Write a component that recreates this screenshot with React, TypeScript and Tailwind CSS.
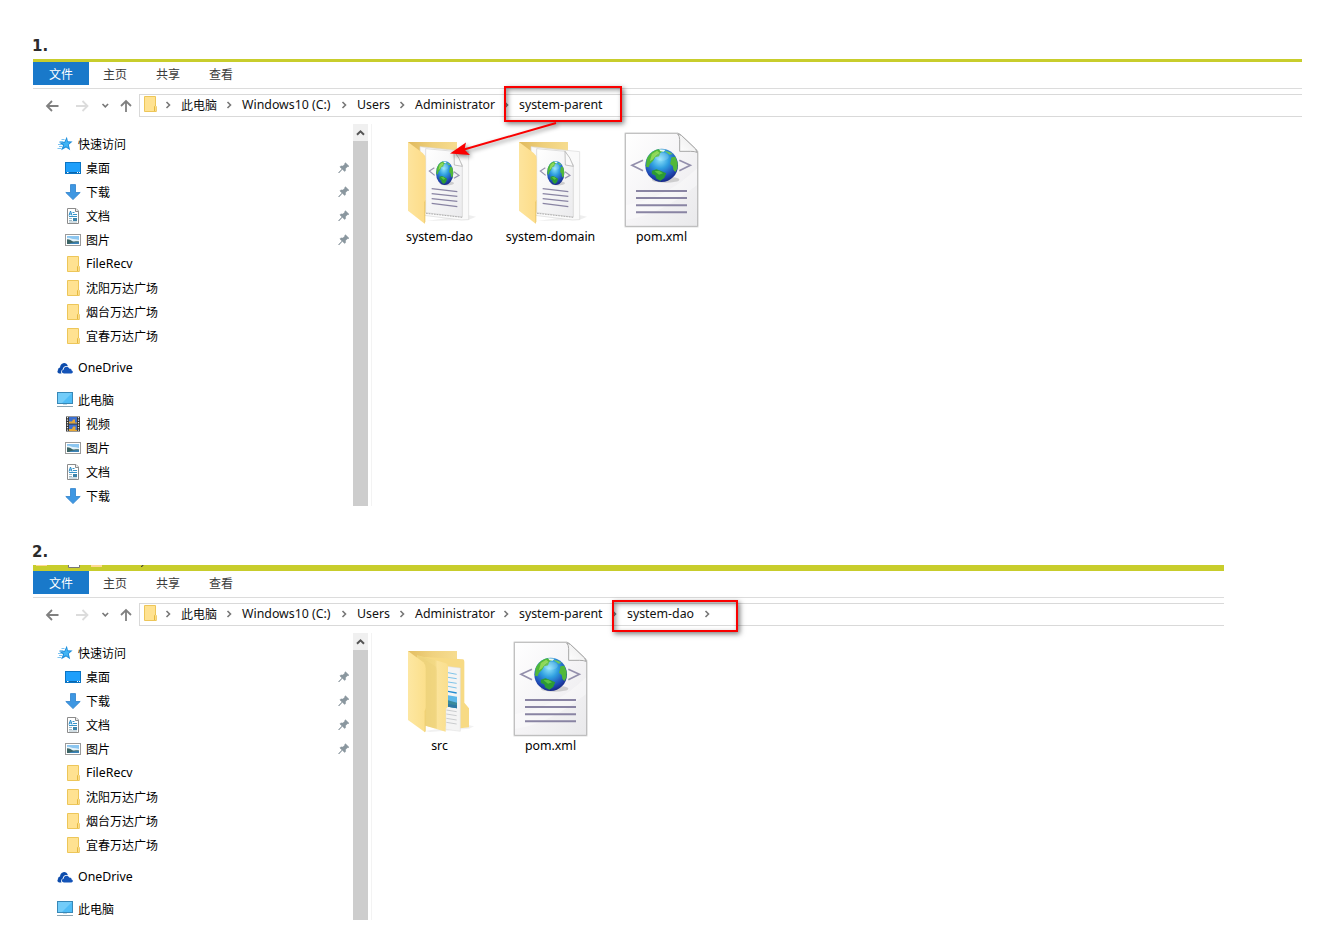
import React, { ReactNode } from "react";

const latin = "font-['Noto_Sans','Noto_Sans_CJK_SC',sans-serif] text-[12.35px]";
const cjk = "font-['Noto_Sans_CJK_SC',sans-serif] text-[12px]";

const isLatin = (s: string) => /^[\x00-\x7f]+$/.test(s);

function Label({ children }: { children: string }) {
  return <span className={`${isLatin(children) ? latin : cjk} whitespace-nowrap leading-6`}>{children}</span>;
}

/* ---------- small icons (16 x 16) ---------- */

function Small({ children }: { children: ReactNode }) {
  return (
    <svg width="16" height="16" viewBox="0 0 16 16" className="block shrink-0">
      {children}
    </svg>
  );
}

const StarIcon = () => (
  <Small>
    <path d="M9.800.8 10.900 5.300 15.600 5.600 11.800 8.700 13.200 14.300 9 11.400 4.200 14.300 6 9.300 2 6.500 7.300 5.900z" fill="#1f8edb" />
    <path d="M9.600 3.200 10.400 6.300 13.200 6.600 10.800 8.800 11.500 12 8.900 10.200 6.300 11.500 7.200 8.800 5 7.200 8 6.800z" fill="#41b4f5" />
    <path d="M4.500 3.500h3M2.500 5.500h4M1 8.500h4M2 10.500h3M.5 12.500h4" stroke="#6dbdf0" strokeWidth=".9" />
  </Small>
);

const DesktopIcon = () => (
  <Small>
    <rect x=".5" y="2.500" width="15" height="11" fill="#1e9ffb" stroke="#0a74c4" />
    <path d="M15 3v8L6 13h9z" fill="#38b0ff" opacity=".6" />
    <path d="M1 12.500h14" stroke="#0b67ad" />
    <path d="M2 12.500h1.500M12 12.500h1M14 12.500h1" stroke="#fff" />
  </Small>
);

const DownIcon = () => (
  <Small>
    <path d="M5.500.6h5v7.900h4.700L8 15.600.8 8.500h4.700z" fill="#3e97e2" stroke="#2c80cb" strokeWidth=".8" />
  </Small>
);

const DocIcon = () => (
  <Small>
    <path d="M2.500.5h8.500l2.500 2.500v12.500h-11z" fill="#fff" stroke="#8b8b8b" />
    <path d="M10.500.5v3h3" fill="#eee" stroke="#8b8b8b" />
    <path d="M7.500 4.500H9.500M8 6.500h4M4 8.500h8" stroke="#3794c9" />
    <path d="m4 7.500 1.500-4.500L7 7.500M4.500 6h2" fill="none" stroke="#278bc8" />
    <path d="M4 10.500h3M4 12.500h3M4 14h8" stroke="#8aa8b8" strokeWidth=".8" />
    <rect x="8" y="10" width="4" height="3" fill="#3d83a9" />
  </Small>
);

const PictureIcon = () => (
  <Small>
    <rect x=".5" y="2.500" width="15" height="11" fill="#fff" stroke="#9b9b9b" />
    <rect x="2" y="4" width="12" height="8" fill="#8cc6f0" />
    <path d="M2 6c3-1 4 1 6 1s4 .5 6 1v2H2z" fill="#e3f2fa" />
    <path d="M2 7.200c3 0 4 1.500 6 2.300 2 .3 4-.4 6 0v2.500H2z" fill="#3b6464" />
    <path d="M4 12c2-1.800 7-1.800 10-1.800v1.800z" fill="#3c84b8" />
  </Small>
);

const FolderIcon = () => (
  <Small>
    <path d="M2.500.5h11v9.300l.8.800v4.900H2.500z" fill="#ffe291" stroke="#edc659" />
    <path d="M12.500 15v-4.500l1-1" fill="none" stroke="#e5b93f" />
  </Small>
);

const CloudIcon = () => (
  <Small>
    <path d="M5.200 9C3 9 .5 9.500.4 11.500c0 1 .8 1.900 1.900 1.900h2.200C3.600 12 4 10 5.700 9.400 6 7 7.500 5.800 9.500 5.900c.5 0 1 .1 1.400.3C10.200 4 8.300 2.800 6.400 3.200 4.300 3.600 3 5.200 3.100 7.400 2 7.600 1 8.500.8 9.800z" fill="#0c4bab" />
    <path d="M7.200 13.500c-3 0-3.200-3.400-.6-3.700C6.500 6.300 11 5.500 12.200 8.500c2 0 2.500 1.200 2.400 2 1.800.5 1.500 3-.3 3z" fill="#1454b8" />
  </Small>
);

const ComputerIcon = () => (
  <Small>
    <rect x=".5" y=".5" width="15" height="11" fill="#4fbcf6" stroke="#3888b7" />
    <path d="M1 1h14L5 11H1z" fill="#8ad7fc" opacity=".6" />
    <path d="M6 12h4v1H6z" fill="#c3dbe7" />
    <path d="M0 14.500h16" stroke="#8ba4b2" strokeWidth="1" />
  </Small>
);

const VideoIcon = () => (
  <Small>
    <rect x="1" y=".5" width="14" height="15" fill="#333" />
    <rect x="4" y="1" width="8" height="6.500" fill="#3c6fd0" />
    <rect x="4" y="8.500" width="8" height="6.500" fill="#3c6fd0" />
    <path d="M4 5.500h3l1-2h2v3H12v1H4zM4 13h3l1-2.500h2.500V14H12v1H4z" fill="#e2a637" />
    <path d="M2.500 1v14M13.500 1v14" stroke="#eee" strokeWidth="1.200" strokeDasharray="1.200 1.300" />
  </Small>
);

const PinIcon = () => (
  <svg width="12" height="12" viewBox="0 0 12 12" className="block shrink-0">
    <path d="M7.500.8 11 4.200l-1 .6-.8-.1-1.700 2 .1 1.900-1 .9-2.200-2.200L1 11l-.5-.5L4 7 1.900 4.900l.9-1 2 .1 2-1.700-.1-.8z" fill="#8a979f" stroke="#8a979f" strokeWidth=".5" />
  </svg>
);

/* ---------- large icons ---------- */

function Globe({ cx, cy, rx, ry, id }: { cx: number; cy: number; rx: number; ry: number; id: string }) {
  return (
    <g transform={`translate(${cx} ${cy}) scale(${rx / 50} ${ry / 50})`}>
      <defs>
        <radialGradient id={`${id}-sea`} cx=".45" cy=".32" r=".68">
          <stop offset="0" stopColor="#8fe4fb" />
          <stop offset=".4" stopColor="#2f9fe0" />
          <stop offset=".8" stopColor="#1f49b4" />
          <stop offset="1" stopColor="#182a86" />
        </radialGradient>
      </defs>
      <ellipse cx="12" cy="43" rx="42" ry="9" fill="#777" opacity=".3" />
      <circle r="50" fill={`url(#${id}-sea)`} />
      <path d="M-46-18C-38-36-22-47-8-48L6-43-4-38-8-27-20-24-26-14-36-4-40 6-48 4Z" fill="#4fb83a" />
      <path d="M-30-34-14-44-6-38-18-30-26-18-36-12Z" fill="#8fd857" />
      <path d="M-30 16-16 12 0 18 14 24 8 38-4 46-16 40-20 30-30 26Z" fill="#2c9b34" />
      <path d="M-22 18-8 16 4 24-8 28Z" fill="#5cc343" />
      <path d="M30-24 42-26 49-8 48 10 42 20 36 14 34 2 26-4 28-14Z" fill="#52b83a" />
      <path d="M8-44 24-40 34-34 24-32 18-36Z" fill="#6cc75a" />
      <path d="M-8-48 12-47 6-41-4-42Z" fill="#e6f8ee" />
      <ellipse cx="0" cy="-26" rx="22" ry="12" fill="#fff" opacity=".15" />
    </g>
  );
}

function XmlFile({ id }: { id: string }) {
  return (
    <svg width="95" height="97" viewBox="12 18 285 291" className="block">
      <defs>
        <linearGradient id={`${id}-p`} x1="0" y1="0" x2="1" y2="1">
          <stop offset="0" stopColor="#fff" />
          <stop offset=".5" stopColor="#f5f4f6" />
          <stop offset="1" stopColor="#e9e9eb" />
        </linearGradient>
        <linearGradient id={`${id}-f`} x1="0" y1="1" x2="1" y2="0">
          <stop offset="0" stopColor="#fff" />
          <stop offset=".5" stopColor="#f4f4f4" />
          <stop offset="1" stopColor="#d2d2d2" />
        </linearGradient>
      </defs>
      <path d="M46 25H203L263 80V305H46Z" fill="none" stroke="#ccc" strokeWidth="5" opacity=".6" />
      <path d="M46 25H203Q208 25 214 31L257 72Q263 78 263 84V304H46Z" fill={`url(#${id}-p)`} stroke="#b7b7b7" strokeWidth="3" />
      <path d="M48 240Q170 220 261 130V180Q150 270 48 285Z" fill="#fff" opacity=".35" />
      <path d="M203 27Q209 33 209 44V79H242Q254 79 261 82L257 72 214 31Z" fill={`url(#${id}-f)`} stroke="#a8a8a8" strokeWidth="3" />
      <path d="M99 106 66 121 99 137M208 106 241 121 208 137" fill="none" stroke="#938fac" strokeWidth="5" />
      <Globe cx={155} cy={121} rx={49} ry={50} id={id} />
      <path d="M78 198H231M78 219H231M78 240.500H231M78 262H231" stroke="#8984a3" strokeWidth="6" />
    </svg>
  );
}

function XmlFolder({ id }: { id: string }) {
  return (
    <svg width="95" height="97" viewBox="-24 18 285 291" className="block">
      <defs>
        <linearGradient id={`${id}-y`} x1="0" y1="0" x2="1" y2="0">
          <stop offset="0" stopColor="#fde49d" />
          <stop offset="1" stopColor="#fddc88" />
        </linearGradient>
        <linearGradient id={`${id}-b`} x1="0" y1="0" x2="1" y2="0">
          <stop offset="0" stopColor="#e0b95c" />
          <stop offset=".5" stopColor="#efd07c" />
          <stop offset="1" stopColor="#f6dc8f" />
        </linearGradient>
        <linearGradient id={`${id}-w`} x1="0" y1="0" x2="1" y2="1">
          <stop offset="0" stopColor="#fff" />
          <stop offset="1" stopColor="#ebebed" />
        </linearGradient>
      </defs>
      <path d="M80 288 205 270 228 275 206 284Z" fill="#ddd" opacity=".5" />
      <path d="M24 51H171V120H24Z" fill={`url(#${id}-b)`} />
      <path d="M60 65 206 80V284L184 285 64 270Z" fill="#fafafa" stroke="#dadada" strokeWidth="2" />
      <path d="M77 71 163 79 187 120V276L77 263Z" fill={`url(#${id}-w)`} stroke="#d0d0d0" strokeWidth="2" />
      <path d="M162 79 163 120 187 124Q178 96 162 79Z" fill="#fafafa" stroke="#a4a4a4" strokeWidth="2" />
      <path d="M103 128 88 138 104 151M162 140 177 151 162 160" fill="none" stroke="#9692af" strokeWidth="3.500" />
      <Globe cx={134} cy={144} rx={26} ry={36} id={id} />
      <path d="M95 191 172 200M95 206 172 214M95 221 172 229M95 235 172 245" stroke="#8984a3" strokeWidth="4" />
      <path d="M78 265 187 277" stroke="#8f8f8f" strokeWidth="2" strokeDasharray="5 3" />
      <path d="M24 51 68 84Q77 91 77 102V214L74 296 24 257Z" fill={`url(#${id}-y)`} />
      <path d="M76 224V290L73 296V232Z" fill="#eac563" />
    </svg>
  );
}

function SourceFolder() {
  return (
    <svg width="95" height="97" viewBox="-24 0 285 291" className="block">
      <defs>
        <linearGradient id="src-front" x1="0" y1="0" x2="1" y2="0">
          <stop offset="0" stopColor="#fde7a2" />
          <stop offset="1" stopColor="#fbdf8b" />
        </linearGradient>
        <linearGradient id="src-mid" x1="0" y1="0" x2="1" y2="0">
          <stop offset=".25" stopColor="#efd57e" />
          <stop offset=".58" stopColor="#f3d985" />
          <stop offset=".66" stopColor="#fbe39a" />
          <stop offset="1" stopColor="#fadf8e" />
        </linearGradient>
        <linearGradient id="src-back" x1="0" y1="0" x2="1" y2="0">
          <stop offset="0" stopColor="#e3be62" />
          <stop offset=".5" stopColor="#f0d27f" />
          <stop offset="1" stopColor="#f6dc90" />
        </linearGradient>
      </defs>
      <path d="M75 273 200 254 222 259 207 266 90 276Z" fill="#ddd" opacity=".4" />
      <path d="M24 33H171V58H24Z" fill="url(#src-back)" />
      <path d="M60 50 188 58Q193 58 193 65V188L207 205V262L180 265 60 250Z" fill="#f7da84" />
      <path d="M137 79 181 84V274L137 268Z" fill="#f4f4f4" stroke="#ddd" strokeWidth="1.500" />
      <path d="M144 98 170 103M144 112 170 116M144 126 170 130M144 139 170 144" stroke="#68b9e6" strokeWidth="2.500" />
      <path d="M144 154 170 159" stroke="#238bd0" strokeWidth="4" />
      <path d="M144 166 171 170V205L144 200Z" fill="#5eb8e9" />
      <path d="M144 181 171 188V205L144 200Z" fill="#3a8a9b" />
      <path d="M144 192 171 196V205L144 200Z" fill="#2e78a4" />
      <path d="M139 210 170 215M139 222 170 227M139 235 170 240M139 247 170 252" stroke="#c2c4c7" strokeWidth="2.500" />
      <path d="M51 45 138 70Q144 73 144 80V200L137 208V275L51 250Z" fill="url(#src-mid)" />
      <path d="M51 45 105 78Q110 82 110 92V265L77 257V80Z" fill="#eed27a" opacity=".5" />
      <path d="M24 33 70 67Q77 74 77 85V200L75 277 24 240Z" fill="url(#src-front)" />
      <path d="M77 204V274L74 277V214Z" fill="#edcd70" />
    </svg>
  );
}

/* ---------- explorer ---------- */

type Row = { icon: () => ReactNode; text: string; root?: boolean; pin?: boolean; gap?: boolean };

const rows: Row[] = [
  { icon: StarIcon, text: "快速访问", root: true },
  { icon: DesktopIcon, text: "桌面", pin: true },
  { icon: DownIcon, text: "下载", pin: true },
  { icon: DocIcon, text: "文档", pin: true },
  { icon: PictureIcon, text: "图片", pin: true },
  { icon: FolderIcon, text: "FileRecv" },
  { icon: FolderIcon, text: "沈阳万达广场" },
  { icon: FolderIcon, text: "烟台万达广场" },
  { icon: FolderIcon, text: "宜春万达广场" },
  { icon: CloudIcon, text: "OneDrive", root: true, gap: true },
  { icon: ComputerIcon, text: "此电脑", root: true, gap: true },
  { icon: VideoIcon, text: "视频" },
  { icon: PictureIcon, text: "图片" },
  { icon: DocIcon, text: "文档" },
  { icon: DownIcon, text: "下载" },
];

function Sidebar({ count }: { count: number }) {
  return (
    <div className="flex w-[320px] shrink-0 flex-col pt-2">
      {rows.slice(0, count).map(({ icon: Icon, text, root, pin, gap }, i) => (
        <div
          key={i}
          className={`flex h-6 shrink-0 items-center gap-[5px] pr-[3px] text-black ${root ? "pl-6" : "pl-8"} ${gap ? "mt-2" : ""}`}
        >
          <Icon />
          <span className={isLatin(text) ? "flex" : "-mt-px flex"}>
            <Label>{text}</Label>
          </span>
          {pin && (
            <span className="ml-auto">
              <PinIcon />
            </span>
          )}
        </div>
      ))}
    </div>
  );
}

const crumbWidths = ["w-[61px]", "w-[115px]", "w-[58px]", "w-[104px]", "w-[108px]", "w-[93px]", "w-[10px]"];

function Chevron() {
  return (
    <svg width="10" height="10" viewBox="0 0 10 10" className="-mt-px block shrink-0">
      <path d="M3.500 2 6.500 5 3.500 8" fill="none" stroke="#777" strokeWidth="1.600" />
    </svg>
  );
}

function AddressBar({ crumbs }: { crumbs: string[] }) {
  return (
    <div className="mt-[5px] flex h-[23px] shrink-0">
      <div className="flex w-[106px] shrink-0 pt-px">
        <svg width="106" height="22" viewBox="0 0 106 22" fill="none">
          <path d="M25.500 11H14.500M19 6 14 11l5 5" stroke="#808080" strokeWidth="1.800" />
          <path d="M43 11h11.500M49.500 6l5 5-5 5" stroke="#dcdcdc" strokeWidth="1.800" />
          <path d="m69.500 9 2.800 2.800 2.800-2.800" stroke="#777" strokeWidth="1.600" />
          <path d="M93 17V6M88 11l5-5 5 5" stroke="#808080" strokeWidth="1.800" />
        </svg>
      </div>
      <div className="flex min-w-0 grow items-center border-y border-l border-[#d9d9d9]">
        <div className="w-[23px] shrink-0 pb-[3px] pl-[2px]">
          <FolderIcon />
        </div>
        {crumbs.map((c, i) => (
          <div key={i} className={`flex shrink-0 items-center gap-2 text-[#111] ${crumbWidths[i]}`}>
            <Chevron />
            {c && (
              <span className="-mt-0.5 flex">
                <Label>{c}</Label>
              </span>
            )}
          </div>
        ))}
      </div>
    </div>
  );
}

type Item = { name: string; icon: ReactNode };

function Explorer({
  count,
  crumbs,
  items,
  bar,
  size,
  children,
}: {
  count: number;
  crumbs: string[];
  items: Item[];
  bar: ReactNode;
  size: string;
  children: ReactNode;
}) {
  return (
    <section className={`relative ml-[33px] flex flex-col overflow-hidden ${size}`}>
      {bar}
      <div className="flex h-[27px] shrink-0 border-b border-[#dcdcdc] text-[#3b3b3b]">
        <div className="flex h-[23px] w-14 items-center justify-center bg-[#1979ca] text-white">
          <Label>文件</Label>
        </div>
        <div className="flex h-[24px] items-center gap-[29px] pl-[14px]">
          <Label>主页</Label>
          <Label>共享</Label>
          <Label>查看</Label>
        </div>
      </div>
      <AddressBar crumbs={crumbs} />
      <div className="mt-[7px] flex min-h-0 grow overflow-hidden">
        <Sidebar count={count} />
        <div className="flex w-[15px] shrink-0 flex-col bg-[#cdcdcd]">
          <div className="flex h-[17px] items-center justify-center bg-[#f0f0f0]">
            <svg width="9" height="7" viewBox="0 0 9 7">
              <path d="M1 5.800 4.500 2.300 8 5.800" fill="none" stroke="#555" strokeWidth="2" />
            </svg>
          </div>
        </div>
        <div className="ml-[3px] flex grow border-l border-[#f3f3f3] pl-3 pt-[7px]">
          {items.map((it) => (
            <div key={it.name} className="flex w-[111px] flex-col items-center text-black">
              {it.icon}
              <span className="-mt-[3px] flex">
                <Label>{it.name}</Label>
              </span>
            </div>
          ))}
        </div>
      </div>
      {children}
    </section>
  );
}

function Heading({ children }: { children: string }) {
  return (
    <h2 className="flex h-[59px] items-end pb-[3px] pl-8 font-['DejaVu_Sans',sans-serif] text-[15px] font-bold leading-5 text-[#2b2b2b]">
      {children}
    </h2>
  );
}

const redBox =
  "absolute border-2 border-[#fa0000] shadow-[2px_2px_5px_rgba(0,0,0,0.5),inset_2px_2px_5px_rgba(0,0,0,0.4)]";

export default function App() {
  return (
    <main className="h-[950px] w-[1332px] overflow-hidden bg-white">
      <Heading>1.</Heading>
      <Explorer
        size="h-[447px] w-[1269px]"
        count={15}
        crumbs={["此电脑", "Windows10 (C:)", "Users", "Administrator", "system-parent"]}
        bar={<div className="h-[3px] shrink-0 bg-[#c8cd2c]" />}
        items={[
          { name: "system-dao", icon: <XmlFolder id="dao" /> },
          { name: "system-domain", icon: <XmlFolder id="domain" /> },
          { name: "pom.xml", icon: <XmlFile id="pom1" /> },
        ]}
      >
        <div className={`${redBox} left-[471px] top-[27px] h-[36px] w-[118px]`} />
        <svg width="120" height="48" viewBox="0 0 120 48" className="absolute left-[411px] top-[57px] drop-shadow-[2px_2px_2px_rgba(0,0,0,0.45)]">
          <path d="M112 7 20 33.500" stroke="#fa0000" strokeWidth="2" />
          <path d="M6 37.500 22 26.500 20.500 33.500 26 39Z" fill="#fa0000" />
        </svg>
      </Explorer>
      <Heading>2.</Heading>
      <Explorer
        size="h-[355px] w-[1191px]"
        count={11}
        crumbs={["此电脑", "Windows10 (C:)", "Users", "Administrator", "system-parent", "system-dao", ""]}
        bar={
          <div className="h-[6px] shrink-0 bg-[#c8cd2c]">
            <svg width="120" height="6" viewBox="0 0 120 6" className="block">
              <path d="M3 0h11v1H3zM58 0h11v2H58z" fill="#ffd991" />
              <path d="M35.500 0v2.500h11V0" fill="#fff" stroke="#777" />
              <path d="M110 0q0 1.500-2 1.500" fill="none" stroke="#333" />
            </svg>
          </div>
        }
        items={[
          { name: "src", icon: <SourceFolder /> },
          { name: "pom.xml", icon: <XmlFile id="pom2" /> },
        ]}
      >
        <div className={`${redBox} left-[579px] top-[35px] h-[32px] w-[126px]`} />
      </Explorer>
    </main>
  );
}
